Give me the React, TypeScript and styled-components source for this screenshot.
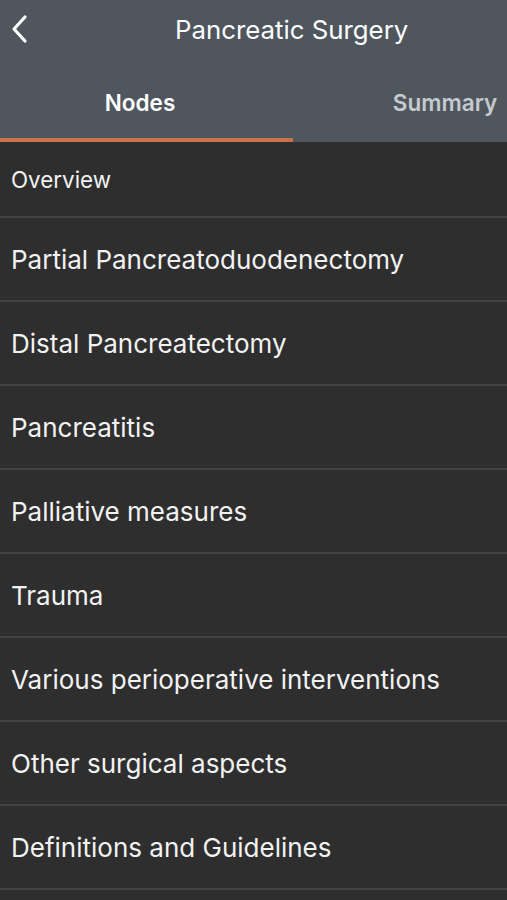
import React, { useState } from 'react';
import styled, { createGlobalStyle } from 'styled-components';

const GlobalStyle = createGlobalStyle`
  html, body {
    margin: 0;
    padding: 0;
    background: #2e2e2e;
  }
  body {
    font-family: Inter, "Noto Sans", "Liberation Sans", sans-serif;
    -webkit-font-smoothing: antialiased;
  }
`;

const Screen = styled.div`
  width: 507px;
  min-height: 900px;
  background: #2e2e2e;
  overflow: hidden;
`;

const Header = styled.div`
  background: #4f565e;
`;

const TopBar = styled.div`
  height: 58px;
  display: flex;
  align-items: center;
`;

const BackButton = styled.button`
  background: transparent;
  border: none;
  padding: 0 0 0 10px;
  height: 100%;
  display: flex;
  align-items: center;
  cursor: pointer;
`;

const Title = styled.h1`
  flex: 1;
  margin: 0 0 0 145px;
  font-size: 25.8px;
  font-weight: 400;
  color: #ffffff;
  white-space: nowrap;
`;

const TabBar = styled.div`
  display: flex;
  height: 84px;
  overflow: hidden;
`;

const Tab = styled.div<{ $active?: boolean; $width: number; $shift: number }>`
  flex: 0 0 ${(p) => p.$width}px;
  display: flex;
  align-items: center;
  justify-content: center;
  padding-right: ${(p) => p.$shift}px;
  padding-top: 8px;
  box-sizing: border-box;
  font-size: 22.5px;
  font-weight: 600;
  white-space: nowrap;
  color: ${(p) => (p.$active ? '#ffffff' : '#c6cacf')};
  border-bottom: 4px solid ${(p) => (p.$active ? '#c8734c' : 'transparent')};
  cursor: pointer;
`;

const List = styled.ul`
  list-style: none;
  margin: 0;
  padding: 0;
`;

const Row = styled.li<{ $small?: boolean }>`
  height: ${(p) => (p.$small ? '74px' : '82px')};
  display: flex;
  align-items: center;
  padding-left: 11px;
  border-bottom: 2px solid #424242;
  font-size: ${(p) => (p.$small ? '22.4px' : '26px')};
  color: #f2f2f2;
  white-space: nowrap;
  cursor: pointer;
`;

const items = [
  'Overview',
  'Partial Pancreatoduodenectomy',
  'Distal Pancreatectomy',
  'Pancreatitis',
  'Palliative measures',
  'Trauma',
  'Various perioperative interventions',
  'Other surgical aspects',
  'Definitions and Guidelines',
];

const App: React.FC = () => {
  const [tab, setTab] = useState<'nodes' | 'summary'>('nodes');

  return (
    <Screen>
      <GlobalStyle />
      <Header>
        <TopBar>
          <BackButton aria-label="Back">
            <svg width="20" height="30" viewBox="0 0 20 30">
              <path
                d="M15 3 L4 15 L15 27"
                fill="none"
                stroke="#ffffff"
                strokeWidth="3.2"
                strokeLinecap="round"
                strokeLinejoin="round"
              />
            </svg>
          </BackButton>
          <Title>Pancreatic Surgery</Title>
        </TopBar>
        <TabBar>
          <Tab
            $width={293}
            $shift={13}
            $active={tab === 'nodes'}
            onClick={() => setTab('nodes')}
          >
            Nodes
          </Tab>
          <Tab
            $width={304}
            $shift={0}
            $active={tab === 'summary'}
            onClick={() => setTab('summary')}
          >
            Summary
          </Tab>
        </TabBar>
      </Header>
      <List>
        {items.map((item, i) => (
          <Row key={item} $small={i === 0}>
            {item}
          </Row>
        ))}
      </List>
    </Screen>
  );
};

export default App;
